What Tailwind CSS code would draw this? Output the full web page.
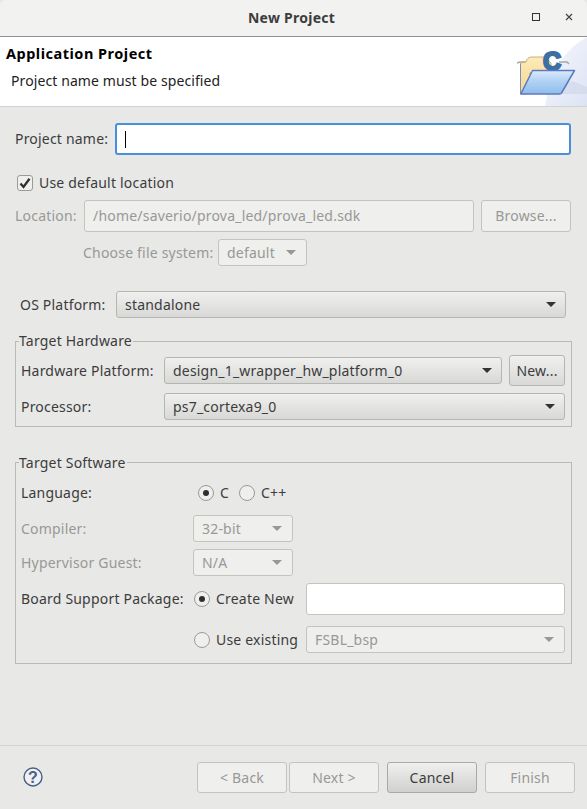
<!DOCTYPE html>
<html><head><meta charset="utf-8"><script src="https://cdn.jsdelivr.net/npm/@tailwindcss/browser@4"></script></head>
<body class="m-0">
<div class="w-[587px] h-[809px] overflow-hidden flex flex-col bg-[#e8e8e7] text-[14px] leading-[20px] text-[#3c3c3c] font-['Noto_Sans','Open_Sans',sans-serif] tracking-[0.2px]">
  <div class="h-[37px] shrink-0 relative flex items-center justify-center pr-[4px] bg-[#f2f2f1] border-b border-[#8f8f8b] rounded-t-[6px]">
    <span class="font-bold text-[#3d3d3d] tracking-[0.25px] text-[14px]">New Project</span>
    <div class="absolute right-[14px] top-[13px] flex items-center gap-[25px]">
      <span class="block w-[8px] h-[8px] border border-[#333]"></span>
      <svg width="8" height="8" viewBox="0 0 8 8"><path d="M1 1L7 7M7 1L1 7" stroke="#444" stroke-width="1.2"/></svg>
    </div>
  </div>
  <div class="h-[70px] shrink-0 relative bg-white border-b border-[#d2d2d0] overflow-hidden">
    <div class="pl-[6px] pt-[6px] font-bold text-[14.5px] text-black tracking-[0.5px]">Application Project</div>
    <div class="pl-[11px] pt-[8px] text-[#222] tracking-[0.1px]">Project name must be specified</div>
    <svg class="absolute right-0 top-0" width="80" height="69" viewBox="0 0 80 69">
      <defs>
        <linearGradient id="bgs" x1="0" y1="0" x2="1" y2="1"><stop offset="0" stop-color="#f8f9fd"/><stop offset="1" stop-color="#dde3f4"/></linearGradient>
        <linearGradient id="front" x1="0" y1="0" x2="0" y2="1"><stop offset="0" stop-color="#dcebfb"/><stop offset=".4" stop-color="#b4d4f5"/><stop offset="1" stop-color="#8fbdeb"/></linearGradient>
        <linearGradient id="back" x1="0" y1="0" x2="0" y2="1"><stop offset="0" stop-color="#fdeab8"/><stop offset="1" stop-color="#f5d88f"/></linearGradient>
      </defs>
      <path d="M80 0 Q46 18 38 69 L80 69 Z" fill="url(#bgs)"/>
      <path d="M22 57 L80 57 L80 50 L66 44 Z" fill="#cfd5e6" opacity=".6"/>
      <path d="M10 26 L13 25 L22 25" fill="none" stroke="#a8a8a8" stroke-width="1.6"/>
      <path d="M13.500 57 L13.500 26 L19 25 Q20 20 25 20 L38 20 L44 26 L44 40 L20 57 Z" fill="url(#back)" stroke="#c9b279" stroke-width="1"/>
      <path d="M13.500 27 L13.500 57" stroke="#7f8fb8" stroke-width="1"/>
      <path d="M52 25 L60 25 L62 27" fill="none" stroke="#a8a8a8" stroke-width="1.6"/>
      <text x="45" y="33" font-family="Liberation Sans" font-weight="700" font-size="25" fill="#3c6fa3" stroke="#3c6fa3" stroke-width="2.2" text-anchor="middle" style="letter-spacing:0">C</text>
      <path d="M13.800 57 L25.500 33.500 L67.500 33.500 L54.500 56 Q54 57 52.500 57 Z" fill="url(#front)" stroke="#5f79c0" stroke-width="1.5" stroke-linejoin="round"/>
      <path d="M25 34 L22 37" stroke="#a8a8a8" stroke-width="1"/>
    </svg>
  </div>
  <div class="flex-1 flex flex-col pl-[15px] pr-[15px]">
    <div class="flex items-center mt-[16px] h-[32px] mr-[1px]">
      <span class="w-[100px]">Project name:</span>
      <div class="flex-1 h-[32px] bg-white border-2 border-[#4a90d9] rounded-[3px] flex items-center pl-[8px]"><span class="block w-px h-[17px] bg-black"></span></div>
    </div>
    <div class="flex items-center mt-[20px] h-[16px] pl-[2px]">
      <span class="w-[16px] h-[16px] bg-[#efefee] border border-[#9a9a96] rounded-[3px] flex items-center justify-center"><svg width="12" height="12" viewBox="0 0 12 12"><path d="M1.5 6.5L4.5 10L10.5 1.8" fill="none" stroke="#2f2f2f" stroke-width="2.3"/></svg></span>
      <span class="ml-[6px]">Use default location</span>
    </div>
    <div class="flex items-center mt-[9px] h-[32px] text-[#989896]">
      <span class="w-[69px]">Location:</span>
      <div class="w-[390px] h-[32px] bg-[#efefee] border border-[#c3c3c0] rounded-[3px] flex items-center pl-[8px]">/home/saverio/prova_led/prova_led.sdk</div>
      <div class="w-[90px] h-[32px] ml-[7px] bg-[#efefee] border border-[#c3c3c0] rounded-[3px] flex items-center justify-center">Browse...</div>
    </div>
    <div class="flex items-center mt-[7px] h-[27px] text-[#989896] pl-[68px]">
      <span class="w-[135px]">Choose file system:</span>
      <div class="w-[89px] h-[27px] bg-[#efefee] border border-[#c3c3c0] rounded-[3px] flex items-center justify-between pl-[8px] pr-[10px]"><span>default</span><span class="w-0 h-0 border-x-[5px] border-x-transparent border-t-[5px] border-t-[#989896]"></span></div>
    </div>
    <div class="flex items-center mt-[25px] h-[27px] pl-[5px] pr-[6px]">
      <span class="w-[96px]">OS Platform:</span>
      <div class="flex-1 h-[27px] bg-gradient-to-b from-[#f0f0ef] to-[#d8d8d6] border border-[#b5b5b2] rounded-[3px] flex items-center justify-between pl-[8px] pr-[9px]"><span>standalone</span><span class="w-0 h-0 border-x-[5px] border-x-transparent border-t-[5px] border-t-[#333]"></span></div>
    </div>
    <div class="relative mt-[23px] h-[86px] border border-[#b9b9b6] flex flex-col pl-[5px] pr-[6px]">
      <span class="absolute left-[3px] -top-[11px] bg-[#e8e8e7] pr-[1px]">Target Hardware</span>
      <div class="flex items-center h-[31px] mt-[13px]">
        <span class="w-[143px]">Hardware Platform:</span>
        <div class="w-[338px] h-[27px] bg-gradient-to-b from-[#f0f0ef] to-[#d8d8d6] border border-[#b5b5b2] rounded-[3px] flex items-center justify-between pl-[8px] pr-[9px]"><span>design_1_wrapper_hw_platform_0</span><span class="w-0 h-0 border-x-[5px] border-x-transparent border-t-[5px] border-t-[#333]"></span></div>
        <div class="flex-1 h-[31px] ml-[7px] bg-gradient-to-b from-[#f0f0ef] to-[#d8d8d6] border border-[#b5b5b2] rounded-[3px] flex items-center justify-center">New...</div>
      </div>
      <div class="flex items-center h-[27px] mt-[7px]">
        <span class="w-[143px]">Processor:</span>
        <div class="flex-1 h-[27px] bg-gradient-to-b from-[#f0f0ef] to-[#d8d8d6] border border-[#b5b5b2] rounded-[3px] flex items-center justify-between pl-[8px] pr-[9px]"><span>ps7_cortexa9_0</span><span class="w-0 h-0 border-x-[5px] border-x-transparent border-t-[5px] border-t-[#333]"></span></div>
      </div>
    </div>
    <div class="relative mt-[35px] h-[202px] border border-[#b9b9b6] flex flex-col pl-[5px] pr-[6px]">
      <span class="absolute left-[3px] -top-[10px] bg-[#e8e8e7] pr-[1px]">Target Software</span>
      <div class="flex items-center h-[20px] mt-[20px]">
        <span class="w-[177px]">Language:</span>
        <span class="w-[16px] h-[16px] rounded-full bg-[#efefee] border border-[#9a9a96] flex items-center justify-center"><span class="w-[6px] h-[6px] rounded-full bg-[#2f2f2f]"></span></span>
        <span class="ml-[6px]">C</span>
        <span class="ml-[10px] w-[16px] h-[16px] rounded-full bg-[#efefee] border border-[#9a9a96]"></span>
        <span class="ml-[6px]">C++</span>
      </div>
      <div class="flex items-center h-[27px] mt-[12px] text-[#989896]">
        <span class="w-[172px]">Compiler:</span>
        <div class="w-[100px] h-[27px] bg-[#efefee] border border-[#c3c3c0] rounded-[3px] flex items-center justify-between pl-[8px] pr-[10px]"><span>32-bit</span><span class="w-0 h-0 border-x-[5px] border-x-transparent border-t-[5px] border-t-[#989896]"></span></div>
      </div>
      <div class="flex items-center h-[27px] mt-[7px] text-[#989896]">
        <span class="w-[172px]">Hypervisor Guest:</span>
        <div class="w-[100px] h-[27px] bg-[#efefee] border border-[#c3c3c0] rounded-[3px] flex items-center justify-between pl-[8px] pr-[10px]"><span>N/A</span><span class="w-0 h-0 border-x-[5px] border-x-transparent border-t-[5px] border-t-[#989896]"></span></div>
      </div>
      <div class="flex items-center h-[32px] mt-[7px]">
        <span class="w-[173px]">Board Support Package:</span>
        <span class="w-[16px] h-[16px] rounded-full bg-[#efefee] border border-[#9a9a96] flex items-center justify-center"><span class="w-[6px] h-[6px] rounded-full bg-[#2f2f2f]"></span></span>
        <span class="ml-[6px] w-[90px]">Create New</span>
        <div class="flex-1 h-[32px] bg-white border border-[#c3c3c0] rounded-[3px]"></div>
      </div>
      <div class="flex items-center h-[27px] mt-[11px]">
        <span class="w-[173px]"></span>
        <span class="w-[16px] h-[16px] rounded-full bg-[#efefee] border border-[#9a9a96]"></span>
        <span class="ml-[6px] w-[90px]">Use existing</span>
        <div class="flex-1 h-[27px] bg-[#efefee] border border-[#c3c3c0] rounded-[3px] flex items-center justify-between pl-[8px] pr-[10px] text-[#989896]"><span>FSBL_bsp</span><span class="w-0 h-0 border-x-[5px] border-x-transparent border-t-[5px] border-t-[#989896]"></span></div>
      </div>
    </div>
  </div>
  <div class="h-[64px] shrink-0 border-t border-[#d2d2d0] flex items-start pt-[16px] pl-[23px] pr-[12px]">
    <svg class="mt-[5px]" width="20" height="20" viewBox="0 0 20 20"><circle cx="10" cy="10" r="9" fill="#eef0f5" stroke="#4a5f85" stroke-width="1.4"/><text x="10" y="15.500" text-anchor="middle" font-family="Liberation Sans" font-weight="700" font-size="16" fill="#4a5f85" style="letter-spacing:0">?</text></svg>
    <div class="ml-auto flex text-[#989896]">
      <div class="w-[90px] h-[31px] bg-[#efefee] border border-[#c3c3c0] rounded-[3px] flex items-center justify-center">&lt; Back</div>
      <div class="w-[90px] h-[31px] ml-[2px] bg-[#efefee] border border-[#c3c3c0] rounded-[3px] flex items-center justify-center">Next &gt;</div>
      <div class="w-[90px] h-[31px] ml-[8px] bg-gradient-to-b from-[#f0f0ef] to-[#d0d0ce] border border-[#a9a9a6] rounded-[3px] flex items-center justify-center text-[#3c3c3c]">Cancel</div>
      <div class="w-[90px] h-[31px] ml-[8px] bg-[#efefee] border border-[#c3c3c0] rounded-[3px] flex items-center justify-center">Finish</div>
    </div>
  </div>
</div>
</body></html>
